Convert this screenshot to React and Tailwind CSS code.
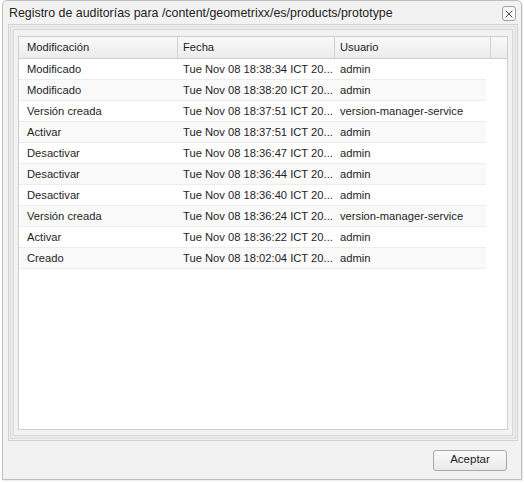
import { X } from "lucide-react";

const rows = [
  ["Modificado", "Tue Nov 08 18:38:34 ICT 20...", "admin"],
  ["Modificado", "Tue Nov 08 18:38:20 ICT 20...", "admin"],
  ["Versión creada", "Tue Nov 08 18:37:51 ICT 20...", "version-manager-service"],
  ["Activar", "Tue Nov 08 18:37:51 ICT 20...", "admin"],
  ["Desactivar", "Tue Nov 08 18:36:47 ICT 20...", "admin"],
  ["Desactivar", "Tue Nov 08 18:36:44 ICT 20...", "admin"],
  ["Desactivar", "Tue Nov 08 18:36:40 ICT 20...", "admin"],
  ["Versión creada", "Tue Nov 08 18:36:24 ICT 20...", "version-manager-service"],
  ["Activar", "Tue Nov 08 18:36:22 ICT 20...", "admin"],
  ["Creado", "Tue Nov 08 18:02:04 ICT 20...", "admin"],
];

export default function App() {
  return (
    <div className="w-[524px] h-[483px] bg-white font-['Liberation_Sans',Arial,sans-serif] text-[#1e1e1e]">
      {/* WINDOW */}
      <div className="ml-[2px] w-[520px] h-[480px] border border-[#bdbdbd] rounded-t-[5px] bg-[#f2f2f2] flex flex-col shadow-[1px_1px_1px_rgba(0,0,0,0.08)]">

        {/* TITLE */}
        <div className="h-[23px] flex items-center justify-between pl-[6px] pr-[5px]">
          <span className="text-[12.4px] text-[#222] pt-[2px]">
            Registro de auditorías para /content/geometrixx/es/products/prototype
          </span>
          <button className="w-[14px] h-[15px] mt-[2px] border border-[#a0a0a0] rounded-[3px] bg-[#f7f7f7] flex items-center justify-center">
            <X className="w-[12px] h-[12px] text-[#333]" strokeWidth={1.8} />
          </button>
        </div>

        {/* BODY */}
        <div className="ml-[5px] mr-[3px] h-[417px] border border-[#d2d2d2] bg-[#f0f0f0] p-[1px]">
          <div className="h-full border border-[#dedede] bg-[#ebebeb] p-[2px]">
            <div className="h-full border border-[#d8d8d8] bg-[#f2f2f2] px-[4px] pt-[6px] pb-[5px]">

              {/* GRID */}
              <div className="h-full border border-[#cfcfcf] bg-white flex flex-col text-[11.2px]">
                <div className="h-[22px] shrink-0 flex border-b border-[#d0d0d0] bg-gradient-to-b from-[#f9f9f9] to-[#ececec]">
                  <div className="w-[159px] pl-[8px] flex items-center border-r border-[#d0d0d0]">Modificación</div>
                  <div className="w-[157px] pl-[5px] flex items-center border-r border-[#d0d0d0]">Fecha</div>
                  <div className="w-[156px] pl-[5px] flex items-center border-r border-[#d0d0d0]">Usuario</div>
                  <div className="flex-1" />
                </div>

                <div className="w-[467px]">
                  {rows.map(([mod, fecha, user], i) => (
                    <div
                      key={i}
                      className={`h-[21px] flex items-center border-b border-[#ededed] ${i % 2 ? "bg-[#f9f9f9]" : "bg-white"}`}
                    >
                      <div className="w-[159px] pl-[8px]">{mod}</div>
                      <div className="w-[157px] pl-[5px]">{fecha}</div>
                      <div className="pl-[5px]">{user}</div>
                    </div>
                  ))}
                </div>
              </div>

            </div>
          </div>
        </div>

        {/* FOOTER */}
        <div className="flex-1 flex items-center justify-end pr-[14px]">
          <button className="w-[74px] h-[21px] border border-[#a9a9a9] rounded-[3px] bg-gradient-to-b from-[#fbfbfb] to-[#e9e9e9] text-[11.5px] text-[#222]">
            Aceptar
          </button>
        </div>

      </div>
    </div>
  );
}
